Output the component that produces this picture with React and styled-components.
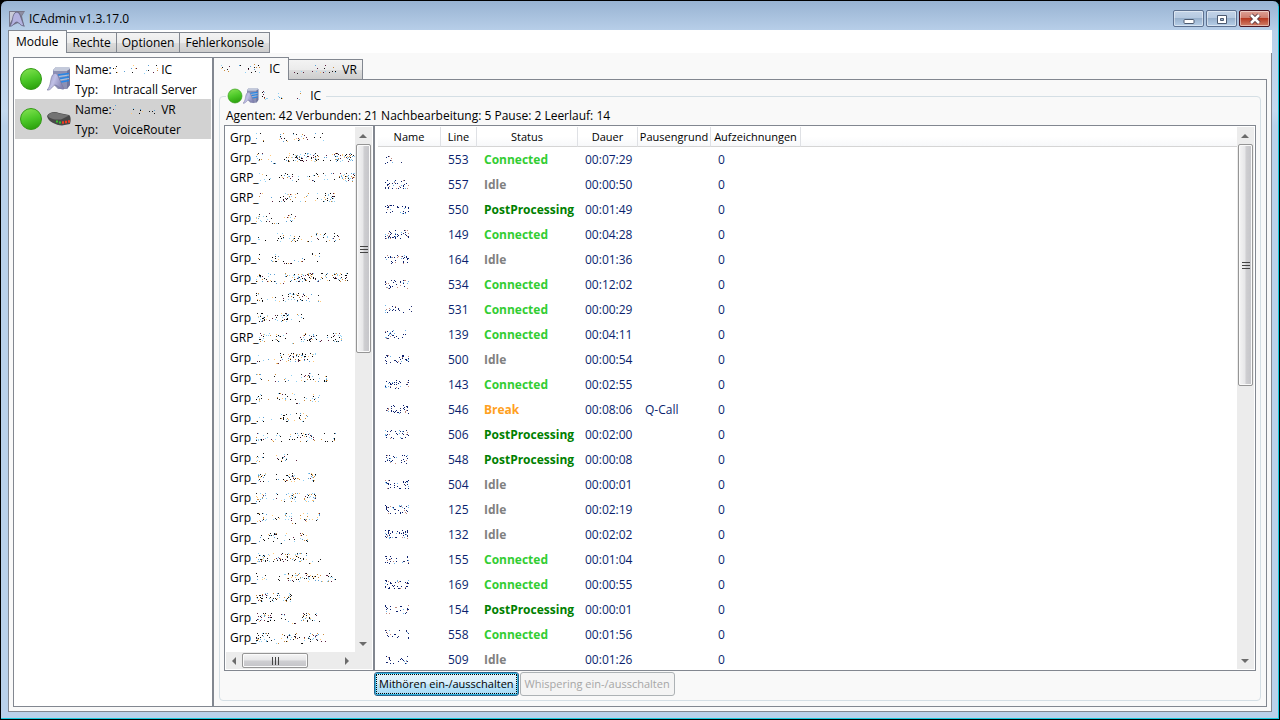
import React, { useState } from 'react'
import styled, { createGlobalStyle, css } from 'styled-components'

const GlobalStyle = createGlobalStyle`
* {
  box-sizing: border-box;
}

body {
  margin: 0;
  background: #000;
  overflow: hidden;
}

body, button {
  font-family: "Open Sans", "Noto Sans", sans-serif;
  font-size: 12px;
  line-height: 16px;
  color: #000;
}
`

const line = '#828790'

const Window = styled.div`
height: 100vh;
display: flex;
flex-direction: column;
padding: 0 7px 7px;
border: 1px solid #000;
border-radius: 7px 7px 0 0;
box-shadow: inset -1px -1px 0 #16c8dc;
background: linear-gradient(#98b3d2, #b8cfe9 30px, #c4d9ef 110px, #b9d1ea 125px);
`

const TitleBar = styled.header`
flex: none;
display: flex;
align-items: center;
height: 29px;
padding: 6px 0 0 1px;
gap: 4px;

svg {
  flex: none;
}
`

const Title = styled.h1`
flex: 1;
margin: 0;
font-size: 12px;
font-weight: normal;
`

const WindowButtons = styled.div`
display: flex;
gap: 2px;
padding-right: 2px;
`

const WindowButton = styled.button`
display: flex;
align-items: center;
justify-content: center;
width: 31px;
height: 17px;
padding: 0;
border: 1px solid ${(props) => (props.$close ? '#4b1522' : '#5d7190')};
border-radius: 2px;
box-shadow: inset 0 0 0 1px rgba(255, 255, 255, 0.45);
background: ${(props) =>
    props.$close
      ? 'linear-gradient(#dda196, #cf7c6c 48%, #b73a22 50%, #d0806a)'
      : 'linear-gradient(#c3d4e8, #b5c9e0 48%, #98b1cd 50%, #b7cfe8)'};
`

const Tabs = styled.div`
flex: 1;
min-width: 0;
min-height: 0;
display: flex;
flex-direction: column;
`

const TabList = styled.div`
flex: none;
display: flex;
align-items: flex-end;
height: 23px;
margin-bottom: -1px;
background: ${(props) => props.$bg || 'transparent'};
z-index: 1;
`

const Tab = styled.button`
display: flex;
align-items: center;
height: 21px;
padding: 0 5px;
margin-left: -1px;
border: 1px solid ${line};
background: linear-gradient(#f3f3f3, #ebebeb 50%, #dddddd 51%, #cdcdcd);
white-space: nowrap;

&:first-child {
  margin-left: 0;
}

${(props) =>
    props.$active &&
    css`
height: 23px;
padding: 0 8px 0 7px;
border-bottom: 0;
background: #f9f9f9;
`}
`

const TabPage = styled.div`
flex: 1;
min-width: 0;
min-height: 0;
display: flex;
padding: ${(props) => props.$pad || '4px'};
border: 1px solid ${line};
background: #f9f9f9;
`

const ModuleList = styled.ul`
flex: none;
width: 200px;
margin: 0;
padding: 1px;
list-style: none;
border: 1px solid ${line};
background: #fff;
`

const ModuleItem = styled.li`
display: flex;
align-items: center;
height: 40px;
padding-left: 4px;
gap: 4px;
background: ${(props) => (props.$selected ? '#d2d2d2' : 'transparent')};
`

const ModuleFacts = styled.dl`
display: grid;
grid-template-columns: 38px 1fr;
grid-auto-rows: 20px;
align-items: center;
margin: 0;
padding-top: 1px;
white-space: nowrap;

dd {
  display: flex;
  align-items: center;
  margin: 0;
}
`

const GroupBox = styled.fieldset`
flex: 1;
min-width: 0;
min-height: 0;
display: flex;
flex-direction: column;
margin: 0;
padding: 3px 4px 4px;
border: 1px solid #d5dfe5;
border-radius: 4px;
`

const Legend = styled.legend`
display: flex;
align-items: center;
height: 18px;
margin-left: 2px;
padding: 0 5px 0 1px;
`

const Summary = styled.p`
flex: none;
margin: 0;
padding: 0 2px 1px;
white-space: nowrap;
`

const Split = styled.div`
flex: 1;
min-height: 0;
display: grid;
grid-template-columns: 150px 1fr;
grid-template-rows: minmax(0, 1fr) auto;
row-gap: 1px;
`

const Panel = styled.div`
display: grid;
grid-template-columns: minmax(0, 1fr) 17px;
grid-template-rows: minmax(0, 1fr) auto;
padding: 1px;
border: 1px solid ${line};
background: #fff;
overflow: hidden;
`

const GroupList = styled.ul`
margin: 0;
padding: 1px 0 0 4px;
list-style: none;
overflow: hidden;
`

const GroupItem = styled.li`
display: flex;
align-items: center;
height: 20px;
white-space: nowrap;

svg {
  flex: none;
}
`

const TableArea = styled.div`
padding-left: 2px;
overflow: hidden;
`

const AgentTable = styled.table`
width: 100%;
table-layout: fixed;
border-collapse: separate;
border-spacing: 0;
white-space: nowrap;
`

const HeadCell = styled.th`
height: 20px;
padding: 0;
font-size: 11px;
font-weight: normal;
text-align: center;
border-right: 1px solid #dfe1e5;
border-bottom: 1px solid #d5d5d5;
background: linear-gradient(#fff 50%, #f7f8fa);

&:last-child {
  border-right: 0;
}
`

const Cell = styled.td`
height: 25px;
padding: 0 0 0 7px;
color: #0a1f6e;

svg {
  display: block;
}
`

const statusColors = {
  Connected: '#32cd32',
  Idle: '#808080',
  PostProcessing: '#008000',
  Break: '#ffa020',
}

const Status = styled.strong`
color: ${(props) => statusColors[props.$status]};
`

const Bar = styled.div`
display: flex;
flex-direction: ${(props) => (props.$horizontal ? 'row' : 'column')};
background: #ececec;
`

const ArrowButton = styled.button`
flex: none;
display: flex;
align-items: center;
justify-content: center;
width: 16px;
height: 17px;
padding: 0;
border: 0;
background: transparent;
`

const Thumb = styled.div`
flex: ${(props) => props.$share} 1 0;
display: flex;
align-items: center;
justify-content: center;
border: 1px solid #959595;
border-radius: 2px;
box-shadow: inset 0 0 0 1px #fafafa;
background: linear-gradient(${(props) => (props.$horizontal ? '180deg' : '90deg')}, #f5f5f5, #e6e6e8 48%, #cfcfd2 52%, #c4c4c8);
margin: ${(props) => (props.$horizontal ? '1px 0' : '0 1px')};
`

const Rest = styled.div`
flex: ${(props) => props.$share} 1 0;
`

const Corner = styled.div`
background: #ececec;
`

const Buttons = styled.div`
grid-column: 2;
display: flex;
gap: 1px;
`

const ActionButton = styled.button`
height: 24px;
padding: 0 4px;
border: 1px solid #2c628b;
border-radius: 3px;
box-shadow: inset 0 0 0 1px #33b5e0;
background: linear-gradient(#e3f4fc, #d6eefb 50%, #bce5fa 51%, #a9dbf5);
outline: 1px dotted #000;
outline-offset: -3px;
font-size: 11px;
white-space: nowrap;

&:disabled {
  color: #a6a6a6;
  border-color: #adb2b5;
  box-shadow: none;
  background: #f4f4f4;
  outline: 0;
}
`

const speckColors = ['#1a1a1a', '#000', '#c98a3c', '#1a1a1a', '#5a9fd4', '#ffc878', '#8fd0f4', '#5c2040', '#8fd0f4']
const blueSpeckColors = ['#0a1f6e', '#0a1f6e', '#c08a80', '#6fb4e8', '#24306e', '#0a1f6e']
const density = { ' ': 0, '.': 1, _: 3, ':': 3, '%': 7, '#': 12 }

// Erased text: what is left of it are loose pixels. Each character of the
// pattern is one narrow cell and gives how many pixels remain in it.
function Specks({ pattern, blue, cell = 3 }) {
  let seed = pattern.length * 7919
  for (const c of pattern) seed = (seed * 31 + c.charCodeAt(0)) % 233280
  const next = (n) => {
    seed = (seed * 9301 + 49297) % 233280
    return Math.floor((seed / 233280) * n)
  }
  const colors = blue ? blueSpeckColors : speckColors
  const dots = []
  pattern.split('').forEach((c, i) => {
    for (let d = 0; d < (density[c] || 0); d++) {
      let y = 1 + next(9)
      if (c === '.') y = 7 + next(3)
      if (c === '_') y = 11
      dots.push({ x: i * cell + next(cell), y, fill: colors[next(colors.length)] })
    }
  })
  return (
    <svg width={pattern.length * cell} height="12" shapeRendering="crispEdges" aria-hidden="true">
      {dots.map((d, i) => (
        <rect key={i} x={d.x} y={d.y} width="1" height="1" fill={d.fill} />
      ))}
    </svg>
  )
}

function Ball({ size }) {
  return (
    <svg width={size} height={size} viewBox="0 0 24 24" aria-hidden="true">
      <defs>
        <linearGradient id="ball" x1="0.3" y1="0" x2="0.6" y2="1">
          <stop offset="0" stopColor="#7fe04e" />
          <stop offset="0.5" stopColor="#4cc828" />
          <stop offset="1" stopColor="#2ba00c" />
        </linearGradient>
      </defs>
      <circle cx="12" cy="12" r="10.5" fill="url(#ball)" stroke="#349a18" strokeWidth="1" />
    </svg>
  )
}

function AppLogo() {
  return (
    <svg width="16" height="18" viewBox="0 0 16 18" aria-hidden="true">
      <path d="M0 1H16L13 6L15 15L16 17L9 13L0 17Z" fill="#77778a" />
      <path d="M1 2H6L4 8L1 13Z" fill="#c9cbd8" />
      <path d="M10 2H15L12 6Z" fill="#8d8da2" />
      <path d="M5 4C7 1 10 2 11 5L15 16C11 16 10 12 8 12C5 12 4 17 1 16C4 12 3 7 5 4Z" fill="#b3b2e0" stroke="#5c5c78" strokeWidth="0.7" />
    </svg>
  )
}

function ServerIcon({ size }) {
  return (
    <svg width={size} height={size} viewBox="0 0 24 24" aria-hidden="true">
      <defs>
        <linearGradient id="wing" x1="0" y1="0" x2="1" y2="0.4">
          <stop offset="0" stopColor="#8d8db8" />
          <stop offset="0.5" stopColor="#c0c0e6" />
          <stop offset="1" stopColor="#8585b4" />
        </linearGradient>
      </defs>
      <path d="M6 3L9 0H22L23 2V18L20 22H11L6 17Z" fill="#8c90b4" />
      <path d="M6 3L9 0H22L23 2L20 4H7Z" fill="#c4cadb" />
      <path d="M20 4L23 2V18L20 22Z" fill="#70759c" />
      <path d="M11 8L22 6.500M13 11.500L22 10M14 15L22 13.500" stroke="#2586e8" strokeWidth="1.7" />
      <path d="M12 9.500L22 8M13 13L22 11.500" stroke="#a9d4f4" strokeWidth="0.8" />
      <path d="M5 9C7 5 10 6 11 9L17 22C13 23 11 18 8 18C6 18 4 24 0 23C4 19 3 13 5 9Z" fill="url(#wing)" stroke="#76769c" strokeWidth="0.6" />
    </svg>
  )
}

function RouterIcon() {
  return (
    <svg width="24" height="24" viewBox="0 0 24 24" aria-hidden="true">
      <path d="M0 9C2 5 8 4 12 6L22 8C24 9 24 14 23 17L15 18.500C9 18 1 15 0 9Z" fill="#484848" />
      <path d="M1 9C3 5 8 5 12 6.500L22 8.500L14 12.500C9 13 3 12 1 9Z" fill="#737373" />
      <path d="M9 14.500H11M12 15.500H14" stroke="#35c22b" strokeWidth="2" />
      <path d="M15 15.500H17M18 15H20M21 14.500H23" stroke="#f03a20" strokeWidth="2.500" />
    </svg>
  )
}

const arrowPaths = {
  up: 'M1 7L5 3L9 7Z',
  down: 'M1 3H9L5 7Z',
  left: 'M7 1V9L3 5Z',
  right: 'M3 1V9L7 5Z',
}

function Arrow({ dir }) {
  return (
    <ArrowButton type="button" tabIndex={-1} aria-label={dir}>
      <svg width="10" height="10" viewBox="0 0 10 10">
        <path d={arrowPaths[dir]} fill="#6b6b6b" />
      </svg>
    </ArrowButton>
  )
}

function ScrollBar({ horizontal, thumb, rest }) {
  return (
    <Bar $horizontal={horizontal}>
      <Arrow dir={horizontal ? 'left' : 'up'} />
      <Thumb $horizontal={horizontal} $share={thumb}>
        <svg width="8" height="8" viewBox="0 0 8 8" shapeRendering="crispEdges">
          <path d={horizontal ? 'M1 0V8M4 0V8M7 0V8' : 'M0 1H8M0 4H8M0 7H8'} stroke="#444" strokeWidth="1" />
        </svg>
      </Thumb>
      <Rest $share={rest} />
      <Arrow dir={horizontal ? 'right' : 'down'} />
    </Bar>
  )
}

const groups = [
  ['Grp_', '::   .%: :%:: : :'],
  ['Grp_', '%: :_  :%%##%%#%.:.%#%%#%'],
  ['GRP_', ':::  ::%::  :%: :.: %#%#'],
  ['GRP_', ':  : :%%::.:: :.%%#'],
  ['Grp_', '%:::__ :%:'],
  ['Grp_', ': .  :% :%:..: %:%.%:'],
  ['Grp_', ':  .%:.__..:. ::'],
  ['Grp_', '%%:%:__%:%#%%#%:%%.#%%#'],
  ['Grp_', '%:. :.:.%%%%:: :.'],
  ['Grp_', '%#%.::%#: ::'],
  ['GRP_', '%%:.%:: _ :%%%:: :%%%'],
  ['Grp_', ':. .._%.#%#%%:%'],
  ['Grp_', ':: .:. :: .:%%:: #'],
  ['Grp_', '%: . %:%.:_ :.%:'],
  ['Grp_', ':: .  %%:.:%:'],
  ['Grp_', '%%:.::: :::%%%: .: %'],
  ['Grp_', '%:   :%%  .'],
  ['Grp_', '%%:. :.%%#:. %#'],
  ['Grp_', '%%: .:.:%#: %%#'],
  ['Grp_', '%%: :: %%_ :%..%'],
  ['Grp_', '.:.%%:_:.: %%'],
  ['Grp_', '%#%::%%%:%%%:_...'],
  ['Grp_', ':::  : :%%%:%%%:::%:'],
  ['Grp_', '%#%:%%.%#'],
  ['Grp_', '%%%#. ::._ %%%::'],
  ['Grp_', '#%%:._:%%%:_:%%%:.'],
]

const agents = [
  [':::  . ', 553, 'Connected', '00:07:29'],
  ['%%:%::%:', 557, 'Idle', '00:00:50'],
  ['%%: ::%:', 550, 'PostProcessing', '00:01:49'],
  ['%#:%::%%', 149, 'Connected', '00:04:28'],
  ['::%:::%%', 164, 'Idle', '00:01:36'],
  ['%%::.:%:', 534, 'Connected', '00:12:02'],
  ['%:::: . :', 531, 'Connected', '00:00:29'],
  ['%%%:..:', 139, 'Connected', '00:04:11'],
  ['%: ::%:%', 500, 'Idle', '00:00:54'],
  ['%%:%:: %', 143, 'Connected', '00:02:55'],
  ['::%%::%%', 546, 'Break', '00:08:06', 'Q-Call'],
  ['%::::%:%', 506, 'PostProcessing', '00:02:00'],
  ['%%:: ::%', 548, 'PostProcessing', '00:00:08'],
  ['%% ::.%%', 504, 'Idle', '00:00:01'],
  ['%%:::%:%', 125, 'Idle', '00:02:19'],
  ['%#::::%%', 132, 'Idle', '00:02:02'],
  ['%%:: .:%', 155, 'Connected', '00:01:04'],
  ['%%::%::%', 169, 'Connected', '00:00:55'],
  ['%: :.::%', 154, 'PostProcessing', '00:00:01'],
  ['%:.::  %', 558, 'Connected', '00:01:56'],
  [':%. .::%', 509, 'Idle', '00:01:26'],
]

const columns = [
  ['Name', 63],
  ['Line', 36],
  ['Status', 101],
  ['Dauer', 60],
  ['Pausengrund', 73],
  ['Aufzeichnungen', 90],
]

const modules = [
  { icon: <ServerIcon size={24} />, specks: ':: .  ::  .: .:', name: 'IC', type: 'Intracall Server' },
  { icon: <RouterIcon />, specks: ':     : .:  .: ', name: 'VR', type: 'VoiceRouter' },
]

function Modules() {
  const [selected, setSelected] = useState('VR')

  return (
    <ModuleList>
      {modules.map((m) => (
        <ModuleItem key={m.name} $selected={selected === m.name} onClick={() => setSelected(m.name)}>
          <Ball size={24} />
          {m.icon}
          <ModuleFacts>
            <dt>Name:</dt>
            <dd>
              <Specks pattern={m.specks} />
              &nbsp;{m.name}
            </dd>
            <dt>Typ:</dt>
            <dd>{m.type}</dd>
          </ModuleFacts>
        </ModuleItem>
      ))}
    </ModuleList>
  )
}

function Agents() {
  return (
    <TableArea>
      <AgentTable>
        <colgroup>
          {columns.map(([name, width]) => (
            <col key={name} width={width} />
          ))}
          <col />
        </colgroup>
        <thead>
          <tr>
            {columns.map(([name]) => (
              <HeadCell key={name}>{name}</HeadCell>
            ))}
            <HeadCell />
          </tr>
        </thead>
        <tbody>
          {agents.map(([specks, lineNo, status, time, reason]) => (
            <tr key={lineNo}>
              <Cell>
                <Specks pattern={specks} blue />
              </Cell>
              <Cell>{lineNo}</Cell>
              <Cell>
                <Status $status={status}>{status}</Status>
              </Cell>
              <Cell>{time}</Cell>
              <Cell>{reason}</Cell>
              <Cell>0</Cell>
              <Cell />
            </tr>
          ))}
        </tbody>
      </AgentTable>
    </TableArea>
  )
}

function ServerPanel() {
  return (
    <GroupBox>
      <Legend>
        <Ball size={16} />
        <ServerIcon size={16} />
        &nbsp;
        <Specks pattern="%:  .::    .:  " />
        &nbsp;IC
      </Legend>
      <Summary>Agenten: 42 Verbunden: 21 Nachbearbeitung: 5 Pause: 2 Leerlauf: 14</Summary>
      <Split>
        <Panel>
          <GroupList>
            {groups.map(([prefix, specks], i) => (
              <GroupItem key={i}>
                {prefix}
                <Specks pattern={specks} cell={4} />
              </GroupItem>
            ))}
          </GroupList>
          <ScrollBar thumb={208} rest={283} />
          <ScrollBar horizontal thumb={64} rest={31} />
          <Corner />
        </Panel>
        <Panel>
          <Agents />
          <ScrollBar thumb={241} rest={267} />
        </Panel>
        <Buttons>
          <ActionButton type="button">Mithören ein-/ausschalten</ActionButton>
          <ActionButton type="button" disabled>
            Whispering ein-/ausschalten
          </ActionButton>
        </Buttons>
      </Split>
    </GroupBox>
  )
}

function App() {
  const [tab, setTab] = useState('Module')

  return (
    <>
      <GlobalStyle />
      <Window>
        <TitleBar>
          <AppLogo />
          <Title>ICAdmin v1.3.17.0</Title>
          <WindowButtons>
            <WindowButton type="button" aria-label="Minimieren">
              <svg width="12" height="12" viewBox="0 0 12 12">
                <rect x="1" y="6.500" width="10" height="4" rx="1" fill="#fff" stroke="#4c5a70" />
              </svg>
            </WindowButton>
            <WindowButton type="button" aria-label="Maximieren">
              <svg width="12" height="12" viewBox="0 0 12 12">
                <path d="M1.500 2.500H10.500V10.500H1.500ZM4.500 5.500V7.500H7.500V5.500Z" fill="#fff" fillRule="evenodd" stroke="#4c5a70" />
              </svg>
            </WindowButton>
            <WindowButton type="button" aria-label="Schließen" $close>
              <svg width="12" height="12" viewBox="0 0 12 12">
                <path d="M2 2L10 10M10 2L2 10" stroke="#5a3a44" strokeWidth="4.500" />
                <path d="M2 2L10 10M10 2L2 10" stroke="#fff" strokeWidth="2.500" />
              </svg>
            </WindowButton>
          </WindowButtons>
        </TitleBar>
        <Tabs>
          <TabList role="tablist" $bg="#fff">
            {['Module', 'Rechte', 'Optionen', 'Fehlerkonsole'].map((name) => (
              <Tab key={name} type="button" role="tab" aria-selected={tab === name} $active={tab === name} onClick={() => setTab(name)}>
                {name}
              </Tab>
            ))}
          </TabList>
          <TabPage>
            <Modules />
            <Tabs>
              <TabList role="tablist">
                <Tab type="button" role="tab" aria-selected $active>
                  <Specks pattern=":.:   : .:.%: " />
                  &nbsp;&nbsp;IC
                </Tab>
                <Tab type="button" role="tab" aria-selected={false}>
                  <Specks pattern="....  .:..:..: " />
                  &nbsp;VR
                </Tab>
              </TabList>
              <TabPage $pad="7px 5px 5px">
                <ServerPanel />
              </TabPage>
            </Tabs>
          </TabPage>
        </Tabs>
      </Window>
    </>
  )
}

export default App
